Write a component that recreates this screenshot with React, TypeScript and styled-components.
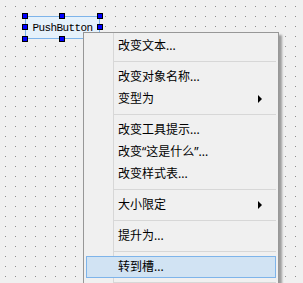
import styled, { createGlobalStyle } from 'styled-components';

const GlobalStyle = createGlobalStyle`
  html, body {
    margin: 0;
    padding: 0;
    overflow: hidden;
  }
  body {
    font-family: "Noto Sans", "Noto Sans CJK SC", sans-serif;
  }
`;

type MenuEntry =
  | { kind: 'item'; label: string; submenu?: boolean; active?: boolean }
  | { kind: 'separator' };

const entries: MenuEntry[] = [
  { kind: 'item', label: '改变文本...' },
  { kind: 'separator' },
  { kind: 'item', label: '改变对象名称...' },
  { kind: 'item', label: '变型为', submenu: true },
  { kind: 'separator' },
  { kind: 'item', label: '改变工具提示...' },
  { kind: 'item', label: '改变“这是什么”...' },
  { kind: 'item', label: '改变样式表...' },
  { kind: 'separator' },
  { kind: 'item', label: '大小限定', submenu: true },
  { kind: 'separator' },
  { kind: 'item', label: '提升为...' },
  { kind: 'separator' },
  { kind: 'item', label: '转到槽...', active: true },
  { kind: 'separator' },
];

const handles = [
  { x: 22, y: 13 },
  { x: 59, y: 13 },
  { x: 97, y: 13 },
  { x: 22, y: 24 },
  { x: 97, y: 24 },
  { x: 22, y: 36 },
  { x: 59, y: 36 },
  { x: 97, y: 36 },
];

export default function App() {
  return (
    <>
      <GlobalStyle />
      <SCanvas>
        <SPushButton>PushButton</SPushButton>
        {handles.map((h, i) => (
          <SHandle key={i} style={{ left: h.x, top: h.y }} />
        ))}
        <SMenu>
          {entries.map((e, i) =>
            e.kind === 'separator' ? (
              <SSeparator key={i} />
            ) : (
              <SItem key={i} $active={e.active}>
                <SLabel>{e.label}</SLabel>
                {e.submenu && <SArrow />}
              </SItem>
            )
          )}
        </SMenu>
      </SCanvas>
    </>
  );
}

const SCanvas = styled.div`
  position: relative;
  width: 303px;
  height: 283px;
  overflow: hidden;
  background-color: #f0f0f0;
  background-image: linear-gradient(90deg, #f0f0f0 9px, transparent 9px),
    linear-gradient(180deg, #f0f0f0 9px, #8f8f8f 9px);
  background-size: 10px 10px;
  background-position: 6px 7px, 6px 7px;
`;

const SPushButton = styled.div`
  position: absolute;
  left: 25px;
  top: 16px;
  width: 75px;
  height: 23px;
  box-sizing: border-box;
  border: 1px solid #7eb4ea;
  background: #e5f1fb;
  display: flex;
  align-items: center;
  justify-content: center;
  font-family: "Liberation Mono", "DejaVu Sans Mono", monospace;
  font-size: 11px;
  letter-spacing: -0.6px;
  color: #000;
`;

const SHandle = styled.div`
  position: absolute;
  width: 6px;
  height: 6px;
  box-sizing: border-box;
  border: 1px solid #000;
  background: #0000ff;
`;

const SMenu = styled.div`
  position: absolute;
  left: 83px;
  top: 32px;
  width: 196px;
  box-sizing: border-box;
  padding: 2px;
  background: #f0f0f0;
  border: 1px solid #979797;
  box-shadow: 3px 3px 2px rgba(0, 0, 0, 0.35);
  display: flex;
  flex-direction: column;

  &::before {
    content: '';
    position: absolute;
    left: 29px;
    top: 0;
    bottom: 0;
    width: 1px;
    background: #d7d7d7;
  }
`;

const SItem = styled.div<{ $active?: boolean }>`
  position: relative;
  height: 22px;
  box-sizing: border-box;
  display: flex;
  align-items: center;
  padding-left: 31px;
  padding-right: 12px;
  border: 1px solid ${(p) => (p.$active ? '#7eb4ea' : 'transparent')};
  background: ${(p) => (p.$active ? '#d1e3f3' : 'transparent')};
  font-size: 12px;
  color: #000;
`;

const SLabel = styled.span`
  flex: 1;
  line-height: 20px;
  white-space: nowrap;
`;

const SArrow = styled.span`
  width: 0;
  height: 0;
  border-top: 4px solid transparent;
  border-bottom: 4px solid transparent;
  border-left: 4px solid #000;
  margin-right: 1px;
`;

const SSeparator = styled.div`
  height: 9px;
  display: flex;
  align-items: center;
  padding-left: 27px;

  &::after {
    content: '';
    flex: 1;
    height: 1px;
    background: #d7d7d7;
  }
`;
